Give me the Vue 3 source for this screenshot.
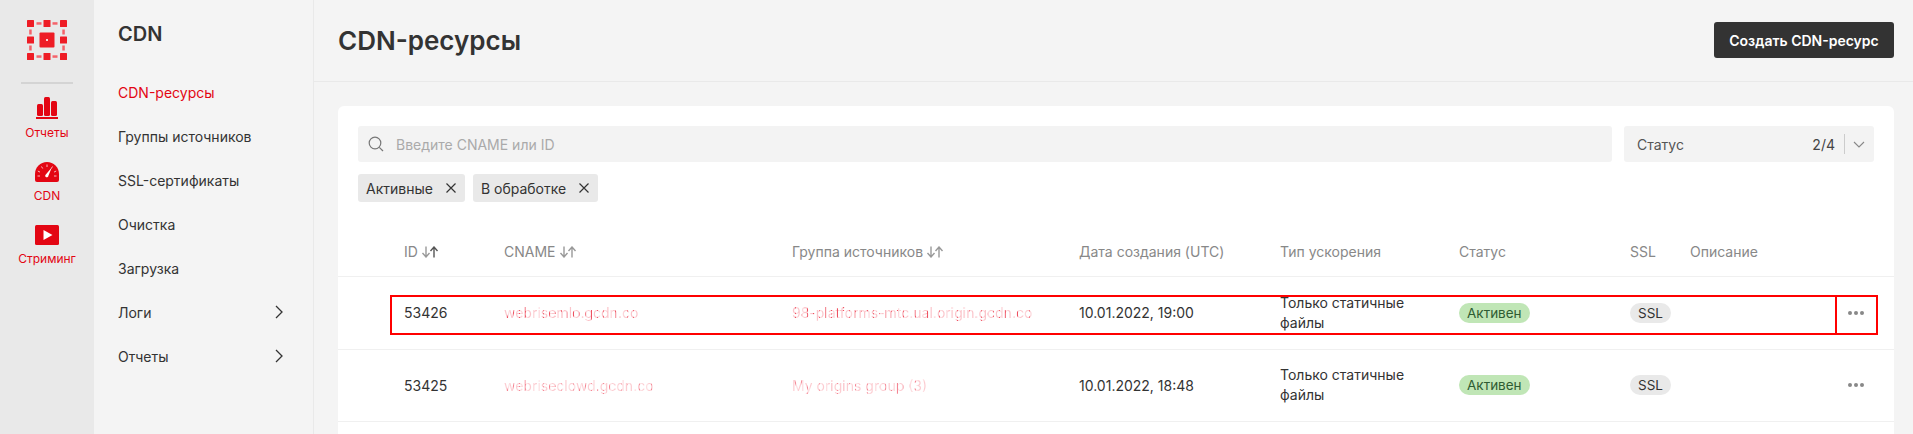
<template>
  <div class="page">
    <!-- левая полоса -->
    <aside class="rail">
      <div class="logo">
        <svg width="40" height="40" viewBox="0 0 40 40" fill="#ee1c25">
          <rect v-for="s in logoSquares" :key="s[0] + '-' + s[1]" :x="s[0]" :y="s[1]" width="7" height="7" rx="0.5" />
          <rect x="9.500" y="2.200" width="5" height="2.500" fill="#f4636a" />
          <rect x="25.500" y="2.200" width="5" height="2.500" fill="#f4636a" />
          <rect x="9.500" y="35.300" width="5" height="2.500" fill="#f4636a" />
          <rect x="25.500" y="35.300" width="5" height="2.500" fill="#f4636a" />
          <rect x="2.200" y="9.500" width="2.500" height="5" fill="#f4636a" />
          <rect x="2.200" y="25.500" width="2.500" height="5" fill="#f4636a" />
          <rect x="35.300" y="9.500" width="2.500" height="5" fill="#f4636a" />
          <rect x="35.300" y="25.500" width="2.500" height="5" fill="#f4636a" />
          <rect x="12.500" y="12.500" width="15" height="15" rx="1" />
          <rect x="19" y="19" width="2" height="2" fill="#fbd0d2" />
        </svg>
      </div>
      <div class="rail-line"></div>
      <div class="rail-item first">
        <svg width="22" height="22" viewBox="0 0 22 22" fill="#e30613">
          <rect x="1" y="7" width="6" height="12" rx="1.500" />
          <rect x="8" y="0" width="6" height="19" rx="1.500" />
          <rect x="15" y="4" width="6" height="15" rx="1.500" />
          <rect x="0" y="20" width="22" height="2" />
        </svg>
        <span>Отчеты</span>
      </div>
      <div class="rail-item">
        <svg width="24" height="20" viewBox="0 0 24 20">
          <path d="M12 0C5.400 0 0 5.400 0 12v6a2 2 0 0 0 2 2h20a2 2 0 0 0 2-2v-6C24 5.400 18.600 0 12 0z" fill="#e30613" />
          <path d="M12 2.500v2.500M6.500 4.500l1.200 2M2.800 9l2.200 1.100M2.500 14h2.500M21.500 14H19M21.200 9L19 10.100M17.500 4.500l-1.200 2" stroke="#f7b9bd" stroke-width="1" />
          <path d="M16.800 5.500l-3.400 8.200a1.600 1.600 0 1 1-2.600-1.200z" fill="#fff" />
        </svg>
        <span>CDN</span>
      </div>
      <div class="rail-item">
        <svg width="24" height="20" viewBox="0 0 24 20">
          <rect width="24" height="20" rx="1.500" fill="#e30613" />
          <path d="M8.500 5l9 5-9 5z" fill="#fff" />
        </svg>
        <span>Стриминг</span>
      </div>
    </aside>

    <!-- меню раздела -->
    <nav class="side">
      <div class="side-title">CDN</div>
      <div v-for="item in menu" :key="item.name" class="side-item" :class="{ active: item.active }">
        <span>{{ item.name }}</span>
        <svg v-if="item.more" width="8" height="14" viewBox="0 0 8 14" fill="none" stroke="#333" stroke-width="1.300">
          <path d="M1 1l6 6-6 6" />
        </svg>
      </div>
    </nav>

    <main class="main">
      <header class="top">
        <h1>CDN-ресурсы</h1>
        <button class="create-btn">Создать CDN-ресурс</button>
      </header>

      <section class="card">
        <div class="filters">
          <div class="search">
            <svg width="16" height="16" viewBox="0 0 16 16" fill="none" stroke="#777" stroke-width="1.200">
              <circle cx="7" cy="7" r="5.800" />
              <path d="M11.300 11.300l3.700 3.700" />
            </svg>
            <span>Введите CNAME или ID</span>
          </div>
          <div class="status-select">
            <span class="status-name">Статус</span>
            <span class="status-count">2/4</span>
            <i class="status-sep"></i>
            <svg width="12" height="7" viewBox="0 0 12 7" fill="none" stroke="#888" stroke-width="1.100">
              <path d="M1 1l5 5 5-5" />
            </svg>
          </div>
        </div>

        <div class="chips">
          <div v-for="chip in chips" :key="chip" class="chip">
            <span>{{ chip }}</span>
            <svg width="10" height="10" viewBox="0 0 10 10" fill="none" stroke="#333" stroke-width="1.200">
              <path d="M0.500 0.500l9 9M9.500 0.500l-9 9" />
            </svg>
          </div>
        </div>

        <div class="row head">
          <div v-for="col in columns" :key="col.name" class="cell">
            {{ col.name }}
            <svg v-if="col.sort" class="sort" width="18" height="12" viewBox="0 0 18 12" fill="none" stroke-width="1.400">
              <path d="M5 0.500v10M1.500 7l3.500 4 3.500-4" stroke="#999" />
              <path d="M13 11.500v-10M9.500 5l3.500-4 3.500 4" :stroke="col.dark ? '#555' : '#999'" />
            </svg>
          </div>
        </div>

        <div v-for="(r, i) in rows" :key="r.id" class="row body">
          <div class="cell">{{ r.id }}</div>
          <div class="cell hidden-text" :class="{ pale: i > 0 }">{{ r.cname }}</div>
          <div class="cell hidden-text" :class="{ pale: i > 0 }">{{ r.group }}</div>
          <div class="cell">{{ r.date }}</div>
          <div class="cell type">Только статичные файлы</div>
          <div class="cell"><span class="pill green">Активен</span></div>
          <div class="cell"><span class="pill gray">SSL</span></div>
          <div class="cell dots-cell">
            <svg width="16" height="4" viewBox="0 0 16 4" fill="#888">
              <circle cx="2" cy="2" r="2" />
              <circle cx="8" cy="2" r="2" />
              <circle cx="14" cy="2" r="2" />
            </svg>
          </div>
          <!-- красная разметка поверх первой строки -->
          <template v-if="i === 0">
            <div class="mark mark-row"></div>
            <div class="mark mark-dots"></div>
          </template>
        </div>
      </section>
    </main>
  </div>
</template>

<script setup>
const logoSquares = [
  [0, 0], [16.5, 0], [33, 0],
  [0, 16.5], [33, 16.5],
  [0, 33], [16.5, 33], [33, 33],
]

const menu = [
  { name: 'CDN-ресурсы', active: true },
  { name: 'Группы источников' },
  { name: 'SSL-сертификаты' },
  { name: 'Очистка' },
  { name: 'Загрузка' },
  { name: 'Логи', more: true },
  { name: 'Отчеты', more: true },
]

const chips = ['Активные', 'В обработке']

const columns = [
  { name: 'ID', sort: true, dark: true },
  { name: 'CNAME', sort: true },
  { name: 'Группа источников', sort: true },
  { name: 'Дата создания (UTC)' },
  { name: 'Тип ускорения' },
  { name: 'Статус' },
  { name: 'SSL' },
  { name: 'Описание' },
]

const rows = [
  {
    id: 53426,
    cname: 'webrisemlo.gcdn.co',
    group: '98-platforms-mtc.ual.origin.gcdn.co',
    date: '10.01.2022, 19:00',
  },
  {
    id: 53425,
    cname: 'webriseclowd.gcdn.co',
    group: 'My origins group (3)',
    date: '10.01.2022, 18:48',
  },
]
</script>

<style>
html,
body {
  margin: 0;
  background: #f4f4f4;
}
</style>

<style scoped>
.page {
  display: flex;
  height: 434px;
  overflow: hidden;
  background: #f4f4f4;
  color: #333;
  font-family: Inter, 'Noto Sans', sans-serif;
  font-size: 14px;
}

.rail {
  width: 94px;
  flex-shrink: 0;
  background: #e9e9e9;
  display: flex;
  flex-direction: column;
  align-items: center;
}

.logo {
  height: 40px;
  margin-top: 20px;
}

.rail-line {
  width: 52px;
  height: 2px;
  margin-top: 22px;
  background: #d4d4d4;
}

.rail-item {
  display: flex;
  flex-direction: column;
  align-items: center;
  margin-top: 22px;
  font-size: 12px;
  color: #e30613;
}

.rail-item.first {
  margin-top: 13px;
}

.rail-item span {
  margin-top: 6px;
  line-height: 15px;
}

.side {
  width: 220px;
  flex-shrink: 0;
  box-sizing: border-box;
  padding: 22px 26px 0 24px;
  border-right: 1px solid #e9e9e9;
}

.side-title {
  font-size: 20px;
  font-weight: 600;
  line-height: 24px;
  margin-bottom: 24px;
}

.side-item {
  display: flex;
  align-items: center;
  justify-content: space-between;
  height: 44px;
  padding-right: 4px;
}

.side-item.active {
  color: #e30613;
}

.main {
  flex: 1;
  min-width: 0;
}

.top {
  height: 82px;
  box-sizing: border-box;
  display: flex;
  align-items: center;
  justify-content: space-between;
  padding: 0 19px 1px 24px;
  border-bottom: 1px solid #e9e9e9;
}

.top h1 {
  margin: 0;
  font-size: 26px;
  font-weight: 600;
}

.create-btn {
  width: 180px;
  height: 36px;
  border: 0;
  border-radius: 3px;
  background: #333;
  color: #fff;
  font-family: inherit;
  font-size: 14px;
  font-weight: 600;
}

.card {
  margin: 24px 19px 0 24px;
  padding-top: 20px;
  background: #fff;
  border-radius: 6px 6px 0 0;
  min-height: 400px;
}

.filters {
  display: flex;
  gap: 12px;
  padding: 0 20px;
}

.search {
  flex: 1;
  height: 36px;
  display: flex;
  align-items: center;
  gap: 12px;
  padding-left: 10px;
  background: #f3f3f3;
  border-radius: 3px;
  color: #aaa;
}

.status-select {
  width: 250px;
  height: 36px;
  box-sizing: border-box;
  display: flex;
  align-items: center;
  padding: 0 9px 0 13px;
  background: #f3f3f3;
  border-radius: 3px;
}

.status-name {
  flex: 1;
  color: #555;
}

.status-count {
  color: #444;
}

.status-sep {
  width: 1px;
  height: 20px;
  margin: 0 8px 0 9px;
  background: #ccc;
}

.chips {
  display: flex;
  gap: 8px;
  margin-top: 12px;
  padding: 0 20px;
}

.chip {
  height: 28px;
  display: flex;
  align-items: center;
  gap: 13px;
  padding: 0 9px 0 8px;
  background: #e9e9e9;
  border-radius: 3px;
}

.row {
  display: grid;
  grid-template-columns: 100px 288px 287px 201px 179px 171px 60px 1fr;
  position: relative;
  align-items: center;
  padding-left: 66px;
  border-bottom: 1px solid #f0f0f0;
}

.head {
  height: 58px;
  padding-bottom: 16px;
  align-items: end;
  color: #888;
}

.body {
  height: 71.500px;
}

.cell {
  display: flex;
  align-items: center;
  white-space: nowrap;
}

.sort {
  margin-left: 3px;
}

.hidden-text {
  width: fit-content;
  color: transparent;
  background: repeating-linear-gradient(90deg, #fbc4ca 0 3px, #ee5060 3px 4px, #fcd6da 4px 6px);
  -webkit-background-clip: text;
  background-clip: text;
}

.hidden-text.pale {
  background: repeating-linear-gradient(90deg, #fcccd1 0 3px, #f48593 3px 4px, #fddde0 4px 6px);
  -webkit-background-clip: text;
  background-clip: text;
}

.type {
  width: 140px;
  white-space: normal;
  line-height: 20px;
}

.pill {
  display: block;
  height: 20px;
  line-height: 21px;
  padding: 0 8px;
  border-radius: 10px;
  font-size: 13.500px;
}

.green {
  background: #c0e6b6;
  color: #2f5c33;
}

.gray {
  background: #e9e9e9;
}

.dots-cell {
  justify-content: flex-end;
  padding-right: 30px;
}

.mark {
  position: absolute;
  top: 18px;
  height: 40px;
  box-sizing: border-box;
  border: 2px solid #f00;
  pointer-events: none;
}

.mark-row {
  left: 52px;
  width: 1447px;
}

.mark-dots {
  left: 1497px;
  width: 43px;
}
</style>
